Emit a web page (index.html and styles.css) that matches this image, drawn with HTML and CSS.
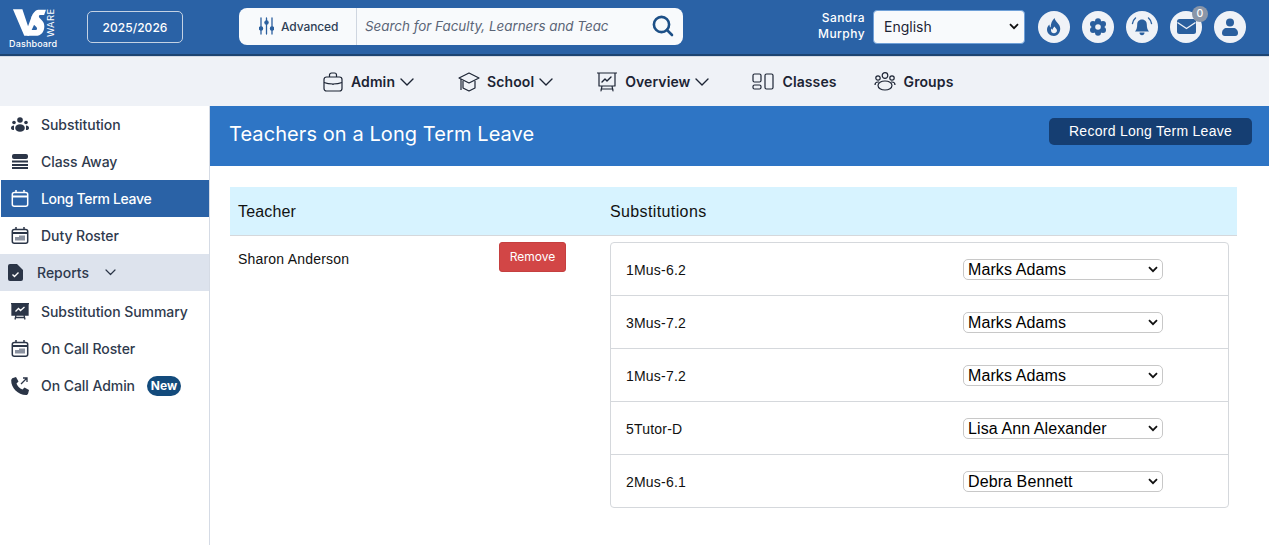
FILE: index.html
```html
<!DOCTYPE html>
<html lang="en">
<head>
<meta charset="utf-8">
<title>Teachers on a Long Term Leave</title>
<link rel="stylesheet" href="styles.css">
</head>
<body>
<header class="topbar">
  <div class="logo">
    <div class="logo-mark">
      <svg width="34" height="29" viewBox="0 0 36 29"><path fill="#fff" d="M1 0H11L17 18 21 7 24 15 18 28H13Z"/><path fill="#fff" d="M28 .5H36L34 6H30C28 6 28 8 29.500 9.500L32 12C35 15 35 21 32 25 30 27 28 28 25 28H16L19 22H25C27 22 27 20 25.500 18.500L23 16C20 13 20 8 22 5 24 2 26 .5 28 .5Z"/></svg>
      <span class="logo-ware">WARE</span>
    </div>
    <span class="logo-text">Dashboard</span>
  </div>
  <button class="year">2025/2026</button>
  <div class="search">
    <div class="adv">
      <svg width="15" height="18" viewBox="0 0 15 18" fill="none" stroke="#2a5f9e" stroke-width="1.300" stroke-linecap="round"><path d="M2 1v16M7.500 1v16M13 1v16"/><circle cx="2" cy="11.500" r="1.600" fill="#2a5f9e"/><circle cx="7.500" cy="5.500" r="1.600" fill="#2a5f9e"/><circle cx="13" cy="11.500" r="1.600" fill="#2a5f9e"/></svg>
      <span>Advanced</span>
    </div>
    <div class="search-field">
      <span class="placeholder">Search for Faculty, Learners and Teac</span>
      <svg width="22" height="22" viewBox="0 0 22 22" fill="none" stroke="#1d5087" stroke-width="2.600" stroke-linecap="round"><circle cx="9.500" cy="9.500" r="7.600"/><path d="M15 15l5 5"/></svg>
    </div>
  </div>
  <div class="user-name">Sandra<br>Murphy</div>
  <select class="lang"><option>English</option></select>
  <div class="round-icons">
    <span class="round"><svg width="14" height="18" viewBox="0 0 14 18"><path fill="#2a5f9e" d="M7.500 0c.3 2.500 3 4.500 4.800 7.200 2.200 3.500.5 10.300-5.300 10.800C2.500 18 0 15 0 11.500 0 9.500 1 7.500 2.500 6.500c0 1.500.4 2.500 1.200 3C3.500 6 5 2.500 7.500 0z"/><path fill="#eff2f7" d="M7.600 8.500c.4 1.400 2.600 2.500 2.400 4.300-.2 1.500-1.500 2.400-3 2.400-1.700 0-3-1.200-3-2.800 0-.7.200-1.300.6-1.800.2.700.6 1.100 1.100 1.200 0-1.300.8-2.500 1.900-3.300z"/></svg></span>
    <span class="round"><svg width="18" height="18" viewBox="0 0 18 18" fill="#2a5f9e"><circle cx="9" cy="9" r="6.500"/><circle cx="9" cy="3.200" r="3"/><circle cx="9" cy="14.800" r="3"/><circle cx="4" cy="6.100" r="3"/><circle cx="14" cy="6.100" r="3"/><circle cx="4" cy="11.900" r="3"/><circle cx="14" cy="11.900" r="3"/><circle cx="9" cy="9" r="2.800" fill="#eff2f7"/></svg></span>
    <span class="round"><svg width="22" height="19" viewBox="0 0 22 19"><path fill="#2a5f9e" d="M11 2.500c3.200 0 4.800 2.400 4.800 5 0 3.500.8 5.300 2.200 7H4c1.400-1.700 2.200-3.500 2.200-7 0-2.600 1.600-5 4.800-5zM8.500 15.500h5c0 1.700-1 2.800-2.500 2.800s-2.500-1.100-2.500-2.800z"/><path fill="none" stroke="#2a5f9e" stroke-width="1.400" stroke-linecap="round" d="M1.500 6.500C1.800 4.200 2.800 2.500 4.500 1M20.500 6.500c-.3-2.300-1.300-4-3-5.500"/></svg></span>
    <span class="round badge-wrap"><svg width="19" height="15" viewBox="0 0 19 15"><rect width="19" height="15" rx="2.500" fill="#2a5f9e"/><path d="M.5 3.500l9 6 9-6" fill="none" stroke="#eff2f7" stroke-width="1.400"/></svg><span class="badge">0</span></span>
    <span class="round"><svg width="16" height="18" viewBox="0 0 16 18"><circle cx="8" cy="4.500" r="4" fill="#2a5f9e"/><path fill="#2a5f9e" d="M0 15c0-3 2.300-5 4.500-5h7c2.200 0 4.500 2 4.500 5 0 1.800-1 3-2.800 3H2.800C1 18 0 16.800 0 15z"/></svg></span>
  </div>
</header>

<nav class="mainnav">
  <a class="nav-item">
    <svg width="20" height="20" viewBox="0 0 20 20" fill="none" stroke="#1c2434" stroke-width="1.200"><rect x="1" y="5" width="18" height="14" rx="2.500"/><path d="M6.500 5V3a2 2 0 012-2h3a2 2 0 012 2v2M1 10.500c5 2 13 2 18 0"/><path d="M10 12v1"/></svg>
    <span>Admin</span>
    <svg class="chev" width="14" height="8" viewBox="0 0 14 8" fill="none" stroke="#1c2434" stroke-width="1.400" stroke-linecap="round" stroke-linejoin="round"><path d="M1 1l6 6 6-6"/></svg>
  </a>
  <a class="nav-item">
    <svg width="22" height="20" viewBox="0 0 22 20" fill="none" stroke="#1c2434" stroke-width="1.200" stroke-linejoin="round"><path d="M11 1l10 5-10 5L1 6z"/><path d="M5 9v7l6 3 6-3V9M3 7v9"/><path d="M3 16v2"/></svg>
    <span>School</span>
    <svg class="chev" width="14" height="8" viewBox="0 0 14 8" fill="none" stroke="#1c2434" stroke-width="1.400" stroke-linecap="round" stroke-linejoin="round"><path d="M1 1l6 6 6-6"/></svg>
  </a>
  <a class="nav-item">
    <svg width="20" height="20" viewBox="0 0 20 20" fill="none" stroke="#1c2434" stroke-width="1.200" stroke-linecap="round" stroke-linejoin="round"><path d="M0 1h20M2 1v13h16V1M5 14l-1 5M15 14l1 5M4 17h12"/><path d="M5 10l3-3 2 2 4-4" stroke-width="1.400"/></svg>
    <span>Overview</span>
    <svg class="chev" width="14" height="8" viewBox="0 0 14 8" fill="none" stroke="#1c2434" stroke-width="1.400" stroke-linecap="round" stroke-linejoin="round"><path d="M1 1l6 6 6-6"/></svg>
  </a>
  <a class="nav-item">
    <svg width="22" height="17" viewBox="0 0 22 17" fill="none" stroke="#1c2434" stroke-width="1.200"><rect x="1" y="1" width="8" height="8" rx="1.500"/><rect x="1" y="12" width="8" height="4" rx="1.500"/><rect x="13" y="1" width="8" height="15" rx="1.500"/></svg>
    <span>Classes</span>
  </a>
  <a class="nav-item">
    <svg width="22" height="19" viewBox="0 0 22 19" fill="none" stroke="#1c2434" stroke-width="1.200"><circle cx="11" cy="3.500" r="2.800"/><circle cx="4" cy="6" r="2.200"/><circle cx="18" cy="6" r="2.200"/><path d="M1 13c0-2 1.500-3 3-3h1M21 13c0-2-1.500-3-3-3h-1"/><ellipse cx="11" cy="13.500" rx="7" ry="4.500"/></svg>
    <span>Groups</span>
  </a>
</nav>

<div class="body">
  <aside class="sidebar">
    <a class="side-item">
      <svg width="18" height="15" viewBox="0 0 18 15" fill="#2b3547"><circle cx="9" cy="3" r="2.800"/><circle cx="3" cy="5.500" r="1.800"/><circle cx="15" cy="5.500" r="1.800"/><ellipse cx="9" cy="11" rx="4.800" ry="3.800"/><path d="M0 11c0-1.500 1-2.500 3-2.500v4.500C1 13 0 12.500 0 11zM18 11c0-1.500-1-2.500-3-2.500v4.500c2 0 3-.5 3-2z"/></svg>
      <span>Substitution</span>
    </a>
    <a class="side-item">
      <svg width="18" height="15" viewBox="0 0 18 15" fill="#2b3547"><rect x="1" y="0" width="16" height="5" rx="2"/><rect x="1" y="6.500" width="16" height="2"/><rect x="1" y="10" width="16" height="2"/><rect x="1" y="13" width="16" height="2"/></svg>
      <span>Class Away</span>
    </a>
    <a class="side-item active">
      <svg width="17" height="17" viewBox="0 0 17 17" fill="none" stroke="#fff" stroke-width="1.500"><rect x=".8" y="2.500" width="15.400" height="13.700" rx="2"/><path d="M.8 6.500h15.400" stroke-width="2"/><path d="M4.500 0v3M12.500 0v3"/></svg>
      <span>Long Term Leave</span>
    </a>
    <a class="side-item">
      <svg width="17" height="17" viewBox="0 0 17 17" fill="none" stroke="#2b3547" stroke-width="1.500"><rect x=".8" y="2.500" width="15.400" height="13.700" rx="2"/><path d="M.8 6h15.400" stroke-width="2"/><path d="M4.500 0v3M12.500 0v3"/><path d="M3.500 10h4V8.500h6v5h-10z" fill="#8b92a0" stroke="none"/></svg>
      <span>Duty Roster</span>
    </a>
    <a class="side-group">
      <svg width="15" height="17" viewBox="0 0 15 17"><path fill="#2b3547" d="M2 0h7l6 6v9a2 2 0 01-2 2H2a2 2 0 01-2-2V2a2 2 0 012-2z"/><path d="M4.500 10.500l2 2 4-4" fill="none" stroke="#fff" stroke-width="1.400"/></svg>
      <span>Reports</span>
      <svg class="chev" width="11" height="7" viewBox="0 0 11 7" fill="none" stroke="#2b3547" stroke-width="1.200" stroke-linecap="round" stroke-linejoin="round"><path d="M1 1l4.500 4.500L10 1"/></svg>
    </a>
    <a class="side-item">
      <svg width="18" height="17" viewBox="0 0 18 17" fill="none" stroke="#2b3547" stroke-width="1.300"><path fill="#2b3547" d="M1 1h16v11H1z"/><path d="M0 .7h18M5 12l-1 4.500M13 12l1 4.500M4 14.500h10"/><path d="M4.500 8.500l3-3 2 2 4-3.500" stroke="#fff"/></svg>
      <span>Substitution Summary</span>
    </a>
    <a class="side-item">
      <svg width="17" height="17" viewBox="0 0 17 17" fill="none" stroke="#2b3547" stroke-width="1.500"><rect x=".8" y="2.500" width="15.400" height="13.700" rx="2"/><path d="M.8 6h15.400" stroke-width="2"/><path d="M4.500 0v3M12.500 0v3"/><path d="M3.500 10h4V8.500h6v5h-10z" fill="#8b92a0" stroke="none"/></svg>
      <span>On Call Roster</span>
    </a>
    <a class="side-item">
      <svg width="18" height="18" viewBox="0 0 18 18" fill="none" stroke="#2b3547"><path fill="#2b3547" stroke="none" d="M2 1l3-1 2.500 4.500-2 2c.8 2.500 3 5 6 6l2-2L18 13l-.8 3.200c-.3 1-1 1.800-2.200 1.800C7 18 0 10.500.2 3.500.2 2.300 1 1.300 2 1z"/><path stroke-width="1.300" d="M10 7l6-6M12 1h4v4"/></svg>
      <span>On Call Admin</span>
      <b class="new">New</b>
    </a>
  </aside>

  <main class="content">
    <div class="title-bar">
      <h1>Teachers on a Long Term Leave</h1>
      <button class="record">Record Long Term Leave</button>
    </div>
    <div class="table-wrap">
      <div class="thead">
        <div class="col-teacher">Teacher</div>
        <div class="col-subs">Substitutions</div>
      </div>
      <div class="trow">
        <div class="col-teacher teacher-cell">
          <span>Sharon Anderson</span>
          <button class="remove">Remove</button>
        </div>
        <ul class="subs">
          <li><span>1Mus-6.2</span><select class="sub-select"><option>Marks Adams</option></select></li>
          <li><span>3Mus-7.2</span><select class="sub-select"><option>Marks Adams</option></select></li>
          <li><span>1Mus-7.2</span><select class="sub-select"><option>Marks Adams</option></select></li>
          <li><span>5Tutor-D</span><select class="sub-select"><option>Lisa Ann Alexander</option></select></li>
          <li><span>2Mus-6.1</span><select class="sub-select"><option>Debra Bennett</option></select></li>
        </ul>
      </div>
    </div>
  </main>
</div>
</body>
</html>
```
FILE: styles.css
```css
* { box-sizing: border-box; }
html, body { margin: 0; height: 100%; }
body { font-family: Inter, "Liberation Sans", sans-serif; background: #fff; color: #1c2434; height: 545px; overflow: hidden; display: flex; flex-direction: column; }
button { font-family: inherit; cursor: pointer; }

.topbar { height: 56px; flex: none; background: #2a62a6; border-bottom: 2px solid #1d4472; display: flex; align-items: center; color: #fff; position: relative; }
.logo { width: 66px; padding-left: 9px; display: flex; flex-direction: column; align-items: flex-start; flex: none; padding-top: 2px; }
.logo-mark { display: flex; align-items: flex-start; height: 31px; margin-left: 3px; }
.logo-mark svg { display: block; margin-top: 2px; width: 34px; height: 28px; flex: none; }
.logo-ware { writing-mode: vertical-rl; transform: rotate(180deg); font-size: 9.500px; line-height: 9px; height: 28px; text-align: left; letter-spacing: .3px; margin-top: 2px; }
.logo-text { font-size: 9px; line-height: 12px; font-weight: 500; letter-spacing: .15px; }
.year { margin-left: 21px; width: 96px; height: 32px; background: transparent; border: 1px solid #c4d2e4; border-radius: 5px; color: #fff; font-size: 12px; font-weight: 500; letter-spacing: .05px; padding: 0; flex: none; }
.search { margin-left: 56px; width: 444px; height: 37px; display: flex; border-radius: 8px; background: #f8fafc; overflow: hidden; flex: none; margin-top: -2px; }
.adv { width: 118px; flex: none; display: flex; align-items: center; gap: 7px; padding-left: 20px; border-right: 1px solid #cfd6e0; color: #2f3f57; font-size: 12px; font-weight: 500; }
.adv span { letter-spacing: -.1px; }
.search-field { flex: 1; display: flex; align-items: center; justify-content: space-between; padding: 0 9px 0 8px; }
.placeholder { font-style: italic; font-size: 13.400px; color: #5b6577; white-space: nowrap; }
.user-name { margin-left: auto; font-size: 12px; line-height: 16px; text-align: right; font-weight: 500; letter-spacing: .45px; flex: none; margin-top: -2px; }
.lang { margin-left: 8px; width: 152px; height: 34px; border: 1px solid #6fa0d8; border-radius: 4px; padding: 0 10px; font-family: inherit; font-size: 14px; color: #1c2434; appearance: none; -webkit-appearance: none; background: #f8fafc url("data:image/svg+xml,%3Csvg xmlns='http://www.w3.org/2000/svg' width='10' height='7' viewBox='0 0 10 7'%3E%3Cpath d='M1 1.200l4 4 4-4' fill='none' stroke='%23111' stroke-width='1.800'/%3E%3C/svg%3E") no-repeat right 5px center; flex: none; margin-top: -1px; }
.round-icons { display: flex; gap: 12px; margin-left: 13px; margin-right: 23px; flex: none; margin-top: -1px; }
.round { width: 32px; height: 32px; border-radius: 50%; background: #eff2f7; display: flex; align-items: center; justify-content: center; position: relative; }
.badge { position: absolute; top: -5px; right: -6px; width: 16px; height: 16px; border-radius: 50%; background: #8a96a8; color: #fff; font-size: 10.500px; line-height: 16px; text-align: center; font-weight: 500; }

.mainnav { height: 50px; flex: none; background: #eff2f7; border-top: 1px solid #d5dbe5; display: flex; align-items: center; padding-left: 323px; color: #1c2434; }
.nav-item { display: flex; align-items: center; font-size: 14px; font-weight: 600; letter-spacing: .1px; margin-right: 44px; }
.nav-item > svg:first-child { margin-right: 8px; }
.nav-item .chev { margin-left: 5px; }
.nav-item:nth-child(2) { margin-right: 44px; }
.nav-item:nth-child(2) > svg:first-child { margin-right: 7px; }
.nav-item:nth-child(3) { margin-right: 43px; }
.nav-item:nth-child(4) { margin-right: 37px; }

.body { flex: 1; display: flex; min-height: 0; }
.sidebar { width: 210px; flex: none; border-right: 1px solid #d5dbe5; }
.side-item { height: 37px; display: flex; align-items: center; padding-left: 10px; margin-left: 1px; font-size: 14px; font-weight: 500; color: #2f3a4d; letter-spacing: -.06px; }
.side-item > svg { width: 18px; flex: none; margin-right: 12px; }
.side-item.active { background: #2a62a6; color: #fff; letter-spacing: -.33px; }
.side-group { height: 37px; display: flex; align-items: center; padding-left: 8px; background: #dde3ed; font-size: 14px; font-weight: 500; color: #2f3a4d; margin-bottom: 2px; }
.side-group > svg:first-child { margin-right: 14px; }
.side-group .chev { margin-left: 16px; }
.new { margin-left: 12px; background: #134b7c; color: #fff; font-size: 12px; font-weight: 700; line-height: 20px; height: 20px; width: 34px; text-align: center; border-radius: 10px; letter-spacing: 0; }

.content { flex: 1; min-width: 0; font-family: "Liberation Sans", Arimo, sans-serif; color: #111; }
.title-bar { height: 60px; background: #2e75c5; display: flex; align-items: flex-start; justify-content: space-between; padding: 12px 17px 0 19px; color: #fff; }
.title-bar h1 { margin: 1px 0 0; font-family: Inter, sans-serif; font-size: 20px; line-height: 30px; font-weight: 400; letter-spacing: .08px; }
.record { width: 203px; height: 27px; background: #153e72; color: #fff; border: 0; border-radius: 5px; font-size: 14px; letter-spacing: .28px; font-weight: 500; padding: 0 0 1px; }
.table-wrap { margin: 21px 32px 0 20px; }
.thead { height: 49px; background: #d7f3ff; border-bottom: 1px solid #d5d8dc; display: flex; align-items: center; font-size: 16px; padding-top: 1px; }
.col-teacher { width: 372px; padding-left: 8px; flex: none; letter-spacing: .15px; }
.thead .col-teacher { width: 380px; }
.col-subs { letter-spacing: .38px; }
.trow { display: flex; }
.teacher-cell { display: flex; align-items: flex-start; justify-content: space-between; padding-right: 36px; padding-top: 6px; font-size: 14px; letter-spacing: .2px; }
.teacher-cell span { padding-top: 9px; }
.remove { width: 67px; height: 30px; background: #d24646; border: 1px solid #c53f3f; border-radius: 3px; color: #fff; font-size: 12px; font-family: Inter, sans-serif; font-weight: 400; padding: 0 0 2px; letter-spacing: 0; }
.subs { list-style: none; margin: 6px 0 0 8px; padding: 0; width: 619px; border: 1px solid #d5d8dc; border-radius: 4px; }
.subs li { height: 53px; border-bottom: 1px solid #d5d8dc; display: flex; align-items: center; justify-content: space-between; padding: 0 65px 0 15px; font-size: 14px; letter-spacing: .2px; }
.subs li > span { padding-top: 2px; }
.subs li:last-child { border-bottom: 0; height: 52px; }
.sub-select { width: 200px; height: 21px; border: 1px solid #c8c8c8; border-radius: 5px; background: #fff url("data:image/svg+xml,%3Csvg xmlns='http://www.w3.org/2000/svg' width='10' height='7' viewBox='0 0 10 7'%3E%3Cpath d='M1 1.200l4 4 4-4' fill='none' stroke='%23111' stroke-width='1.800'/%3E%3C/svg%3E") no-repeat right 4px center; appearance: none; -webkit-appearance: none; font-family: "Liberation Sans", sans-serif; font-size: 16px; letter-spacing: .1px; padding: 0 4px; color: #000; }
```
